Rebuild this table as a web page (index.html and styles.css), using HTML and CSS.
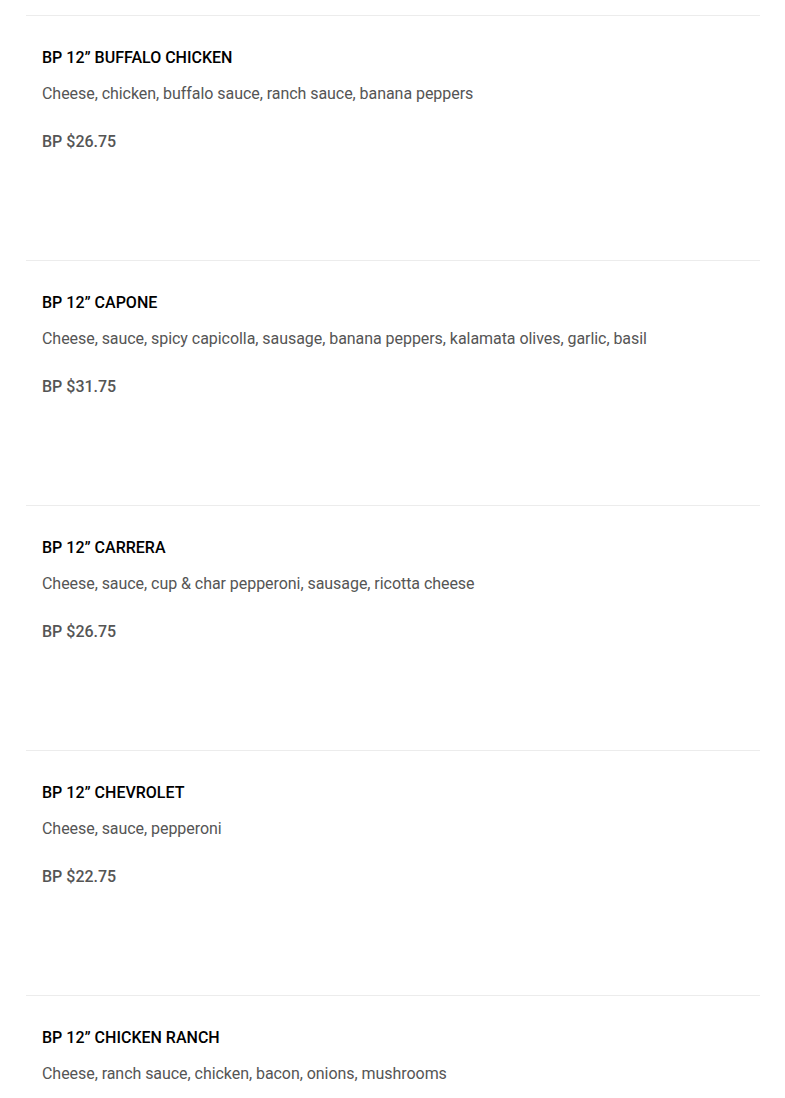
FILE: index.html
```html
<!DOCTYPE html>
<html lang="en">
<head>
<meta charset="utf-8">
<title>Menu</title>
<link rel="stylesheet" href="styles.css">
</head>
<body>
<div class="menu">
  <div class="item">
    <h3 class="name">BP 12” BUFFALO CHICKEN</h3>
    <p class="desc">Cheese, chicken, buffalo sauce, ranch sauce, banana peppers</p>
    <p class="price">BP $26.75</p>
  </div>
  <div class="item">
    <h3 class="name">BP 12” CAPONE</h3>
    <p class="desc">Cheese, sauce, spicy capicolla, sausage, banana peppers, kalamata olives, garlic, basil</p>
    <p class="price">BP $31.75</p>
  </div>
  <div class="item">
    <h3 class="name">BP 12” CARRERA</h3>
    <p class="desc">Cheese, sauce, cup &amp; char pepperoni, sausage, ricotta cheese</p>
    <p class="price">BP $26.75</p>
  </div>
  <div class="item">
    <h3 class="name">BP 12” CHEVROLET</h3>
    <p class="desc">Cheese, sauce, pepperoni</p>
    <p class="price">BP $22.75</p>
  </div>
  <div class="item">
    <h3 class="name">BP 12” CHICKEN RANCH</h3>
    <p class="desc">Cheese, ranch sauce, chicken, bacon, onions, mushrooms</p>
    <p class="price">BP $26.75</p>
  </div>
</div>
</body>
</html>
```
FILE: styles.css
```css
html, body {
  margin: 0;
  padding: 0;
  background: #ffffff;
}
body {
  font-family: Roboto, "Liberation Sans", sans-serif;
  font-size: 16px;
  line-height: 24px;
}
.menu {
  padding: 15px 25px 0 26px;
}
.item {
  box-sizing: border-box;
  height: 245px;
  border-top: 1px solid #ececec;
  padding: 30px 16px 0 16px;
}
.name {
  margin: 0;
  font-size: 16px;
  font-weight: 500;
  color: #000000;
}
.desc {
  margin: 12px 0 0 0;
  color: #555555;
  letter-spacing: -0.05px;
}
.price {
  margin: 24px 0 0 0;
  font-weight: 500;
  color: #555555;
}
```
